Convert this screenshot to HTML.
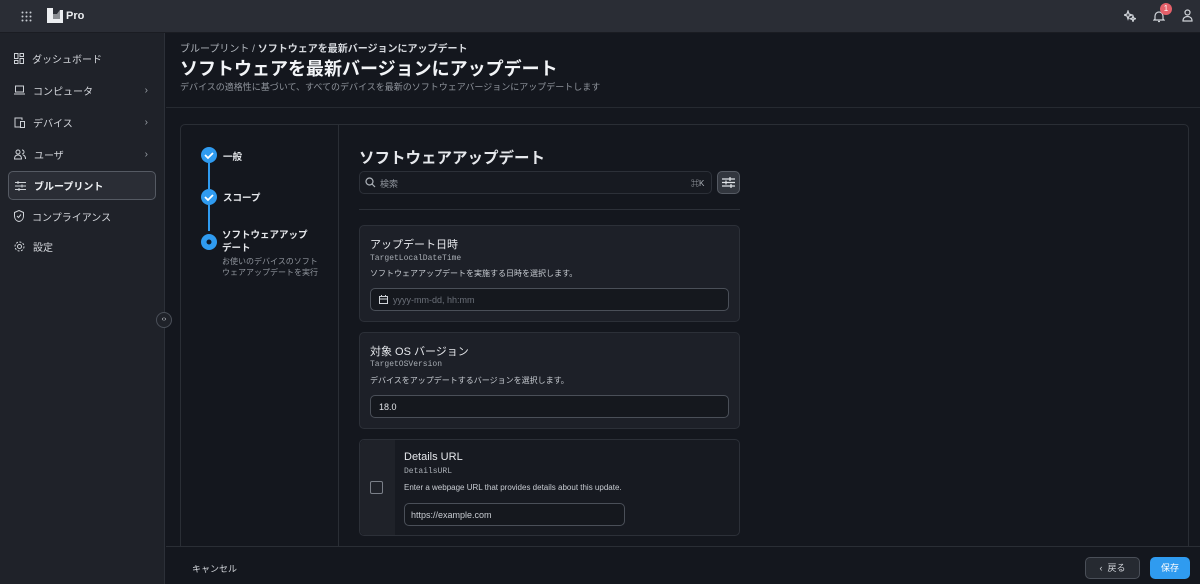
<!DOCTYPE html>
<html><head><meta charset="utf-8"><style>
*{box-sizing:border-box;margin:0;padding:0}
body{width:1200px;height:584px;overflow:hidden;background:#14171e;font-family:"Liberation Sans","Noto Sans CJK JP",sans-serif;color:#e6e8ec;position:relative}
.abs{position:absolute}
.top{left:0;top:0;width:1200px;height:33px;background:#2a2d35;border-bottom:1px solid #1a1c22}
.side{left:0;top:33px;width:165px;height:551px;background:#1f2229;border-right:1px solid #2c3038}
.nav{position:absolute;left:8px;width:148px;height:28px;display:flex;align-items:center;font-size:10px;color:#d4d7dc;padding-left:6px}
.nav svg{margin-right:8px}
.nav .ch{position:absolute;right:8px;color:#9aa0a8;font-size:10px}
.mono{font-family:"Liberation Mono","DejaVu Sans Mono",monospace}
.fld{position:absolute;left:359px;width:381px;background:#1d2028;border:1px solid #2c3038;border-radius:5px}
.inp{position:absolute;border:1px solid #4a4f58;border-radius:5px;background:#15181e;font-size:9px;color:#6b7079;display:flex;align-items:center;padding-left:8px}
</style></head><body>
<div class="abs top">
 <svg class="abs" style="left:21px;top:11px" width="11" height="11" fill="#c8ccd2"><circle cx="1.5" cy="1.5" r="1"/><circle cx="5.5" cy="1.5" r="1"/><circle cx="9.5" cy="1.5" r="1"/><circle cx="1.5" cy="5.5" r="1"/><circle cx="5.5" cy="5.5" r="1"/><circle cx="9.5" cy="5.5" r="1"/><circle cx="1.5" cy="9.5" r="1"/><circle cx="5.5" cy="9.5" r="1"/><circle cx="9.5" cy="9.5" r="1"/></svg>
 <svg class="abs" style="left:47px;top:8px" width="16" height="15"><path d="M0 0h6v6h4l3-4h3v13H0z" fill="#eceef1"/><path d="M6 6h4l3-4v9H6z" fill="#2a2d35" opacity=".5"/></svg>
 <div class="abs" style="left:66px;top:10px;font-size:11px;font-weight:bold;color:#eceef1;line-height:12px">Pro</div>
 <svg class="abs" style="left:1124px;top:10px" width="12" height="12" fill="none" stroke="#cfd3d8" stroke-width="1.2"><path d="M4 1l1 3 3 1-3 1-1 3-1-3-3-1 3-1zM9 6l.7 2 2 .7-2 .7L9 11.5l-.7-2-2-.7 2-.7z"/></svg>
 <svg class="abs" style="left:1153px;top:10px" width="12" height="13" fill="none" stroke="#cfd3d8" stroke-width="1.2"><path d="M2 9V6a4 4 0 018 0v3l1 1H1zM5 11.5h2"/></svg>
 <div class="abs" style="left:1160px;top:3px;width:12px;height:12px;border-radius:6px;background:#e5606a;font-size:8px;color:#fff;text-align:center;line-height:12px">1</div>
 <svg class="abs" style="left:1182px;top:9px" width="11" height="13" fill="none" stroke="#cfd3d8" stroke-width="1.2"><circle cx="5.5" cy="3.5" r="2.5"/><path d="M1 12c0-3 2-4.5 4.5-4.5S10 9 10 12z"/></svg>
</div>
<div class="abs side">
 <div class="nav" style="top:11px"><svg width="10" height="11" fill="none" stroke="#cfd3d8"><rect x=".5" y=".5" width="3.5" height="5"/><rect x="6" y=".5" width="3.5" height="3"/><rect x=".5" y="7.5" width="3.5" height="3"/><rect x="6" y="5.5" width="3.5" height="5"/></svg>ダッシュボード</div>
 <div class="nav" style="top:43px"><svg width="11" height="10" fill="none" stroke="#cfd3d8"><rect x="1.5" y="1" width="8" height="6"/><path d="M0 9h11"/></svg>コンピュータ<span class="ch">›</span></div>
 <div class="nav" style="top:75px"><svg width="11" height="11" fill="none" stroke="#cfd3d8"><path d="M8 3V1H1v9h5"/><rect x="6.5" y="4.5" width="4" height="6"/></svg>デバイス<span class="ch">›</span></div>
 <div class="nav" style="top:107px"><svg width="12" height="11" fill="none" stroke="#cfd3d8"><circle cx="4" cy="3" r="2"/><path d="M0.5 10c0-3 1.5-4 3.5-4s3.5 1 3.5 4zM8 1a2 2 0 010 4M9 6c2 .5 2.5 2 2.5 4"/></svg>ユーザ<span class="ch">›</span></div>
 <div class="nav" style="top:138px;height:29px;background:#2a2d35;border:1px solid #555a63;border-radius:5px;font-weight:bold;color:#f0f2f5"><svg width="11" height="10" fill="none" stroke="#cfd3d8"><path d="M0 1.5h11M0 5h11M0 8.5h11"/><path d="M3 0v3M7 3.5v3M4 7v3"/></svg>ブループリント</div>
 <div class="nav" style="top:169px"><svg width="10" height="12" fill="none" stroke="#cfd3d8"><path d="M5 .5l4.5 2v3.5c0 3-2 5-4.5 5.5C2.5 11 .5 9 .5 6V2.5z"/><path d="M3 6l1.5 1.5L7 4.5"/></svg>コンプライアンス</div>
 <div class="nav" style="top:199px"><svg width="11" height="11" fill="none" stroke="#cfd3d8"><circle cx="5.5" cy="5.5" r="2"/><circle cx="5.5" cy="5.5" r="4.5" stroke-dasharray="2 1.5"/></svg>設定</div>
</div>
<div class="abs" style="left:156px;top:312px;width:16px;height:16px;border-radius:8px;background:#1f2229;border:1px solid #4a4f58;font-size:7px;color:#cfd3d8;text-align:center;line-height:14px">‹›</div>
<div class="abs" style="left:180px;top:40px;font-size:10px;color:#aeb3ba">ブループリント / <b style="color:#d8dbe0">ソフトウェアを最新バージョンにアップデート</b></div>
<div class="abs" style="left:180px;top:55px;font-size:18px;font-weight:bold;color:#f2f4f7">ソフトウェアを最新バージョンにアップデート</div>
<div class="abs" style="left:180px;top:80px;font-size:9px;color:#8f949c">デバイスの適格性に基づいて、すべてのデバイスを最新のソフトウェアバージョンにアップデートします</div>
<div class="abs" style="left:166px;top:107px;width:1034px;height:1px;background:#262a31"></div>
<div class="abs" style="left:180px;top:124px;width:1009px;height:430px;border:1px solid #2a2e35;border-radius:5px"></div>
<div class="abs" style="left:338px;top:125px;width:1px;height:421px;background:#2a2e35"></div>
<svg class="abs" style="left:200px;top:146px" width="18" height="110"><path d="M9 17v26M9 59v26" stroke="#2f9bf0" stroke-width="2"/><circle cx="9" cy="9" r="8" fill="#2f9bf0"/><circle cx="9" cy="51" r="8" fill="#2f9bf0"/><circle cx="9" cy="96" r="8" fill="#2f9bf0"/><path d="M5 9l3 3 5-5M5 51l3 3 5-5" stroke="#fff" stroke-width="1.8" fill="none"/><circle cx="9" cy="96" r="2.5" fill="#0e1a2a"/></svg>
<div class="abs" style="left:223px;top:149px;font-size:9.5px;font-weight:bold">一般</div>
<div class="abs" style="left:223px;top:190px;font-size:9.5px;font-weight:bold">スコープ</div>
<div class="abs" style="left:222px;top:229px;width:92px;font-size:9.5px;font-weight:bold;line-height:13px">ソフトウェアアップデート</div>
<div class="abs" style="left:222px;top:256px;width:96px;font-size:8px;color:#8f949c;line-height:11px">お使いのデバイスのソフトウェアアップデートを実行</div>
<div class="abs" style="left:359px;top:146px;font-size:15.5px;font-weight:bold">ソフトウェアアップデート</div>
<div class="abs" style="left:359px;top:171px;width:353px;height:23px;border:1px solid #2c3038;border-radius:5px;background:#171a21"></div>
<svg class="abs" style="left:365px;top:177px" width="11" height="11" fill="none" stroke="#aeb3ba" stroke-width="1.2"><circle cx="4.5" cy="4.5" r="3.5"/><path d="M7 7l3 3"/></svg>
<div class="abs" style="left:380px;top:177px;font-size:9px;color:#8f949c">検索</div>
<div class="abs" style="left:691px;top:178px;font-size:8px;color:#aeb3ba">⌘K</div>
<div class="abs" style="left:717px;top:171px;width:23px;height:23px;border:1px solid #555a63;border-radius:5px;background:#32363e"></div>
<svg class="abs" style="left:722px;top:177px" width="13" height="11" stroke="#e0e3e7" stroke-width="1.2"><path d="M0 2h13M0 5.5h13M0 9h13"/><path d="M8 0v4M4 3.5v4M9 7v4"/></svg>
<div class="abs" style="left:359px;top:209px;width:381px;height:1px;background:#2c3038"></div>
<div class="fld" style="top:225px;height:97px"></div>
<div class="abs" style="left:370px;top:236px;font-size:11px">アップデート日時</div>
<div class="abs mono" style="left:370px;top:254px;font-size:8px;color:#a7acb3">TargetLocalDateTime</div>
<div class="abs" style="left:370px;top:268px;font-size:8px;color:#c8ccd2">ソフトウェアアップデートを実施する日時を選択します。</div>
<div class="inp" style="left:370px;top:288px;width:359px;height:23px"><svg width="9" height="9" fill="none" stroke="#cfd3d8" style="margin-right:5px"><rect x=".5" y="1.5" width="8" height="7"/><path d="M.5 4h8M2.5 0v2M6.5 0v2"/></svg>yyyy-mm-dd, hh:mm</div>
<div class="fld" style="top:332px;height:97px"></div>
<div class="abs" style="left:370px;top:343px;font-size:11px">対象 OS バージョン</div>
<div class="abs mono" style="left:370px;top:360px;font-size:8px;color:#a7acb3">TargetOSVersion</div>
<div class="abs" style="left:370px;top:375px;font-size:8px;color:#c8ccd2">デバイスをアップデートするバージョンを選択します。</div>
<div class="inp" style="left:370px;top:395px;width:359px;height:23px;color:#e0e3e7">18.0</div>
<div class="fld" style="top:439px;height:97px;background:#171a21"></div>
<div class="abs" style="left:360px;top:440px;width:35px;height:95px;background:#1f2229;border-radius:5px 0 0 5px"></div>
<div class="abs" style="left:370px;top:481px;width:13px;height:13px;border:1px solid #7a7f88;border-radius:2px"></div>
<div class="abs" style="left:404px;top:451px;font-size:11px">Details URL</div>
<div class="abs mono" style="left:404px;top:467px;font-size:8px;color:#a7acb3">DetailsURL</div>
<div class="abs" style="left:404px;top:483px;font-size:8px;color:#c8ccd2">Enter a webpage URL that provides details about this update.</div>
<div class="inp" style="left:404px;top:503px;width:221px;height:23px;color:#c8ccd2;padding-left:6px">https://example.com</div>
<div class="abs" style="left:166px;top:546px;width:1034px;height:38px;background:#14171e;border-top:1px solid #2a2e35"></div>
<div class="abs" style="left:192px;top:562px;font-size:9px;color:#d4d7dc">キャンセル</div>
<div class="abs" style="left:1085px;top:557px;width:55px;height:22px;border:1px solid #4a4f58;border-radius:5px;background:#262a31;font-size:9px;color:#d4d7dc;line-height:20px;text-align:center">‹&nbsp;&nbsp;戻る</div>
<div class="abs" style="left:1150px;top:557px;width:40px;height:22px;border-radius:5px;background:#2f9bf0;font-size:9px;color:#fff;line-height:22px;text-align:center">保存</div>
</body></html>
